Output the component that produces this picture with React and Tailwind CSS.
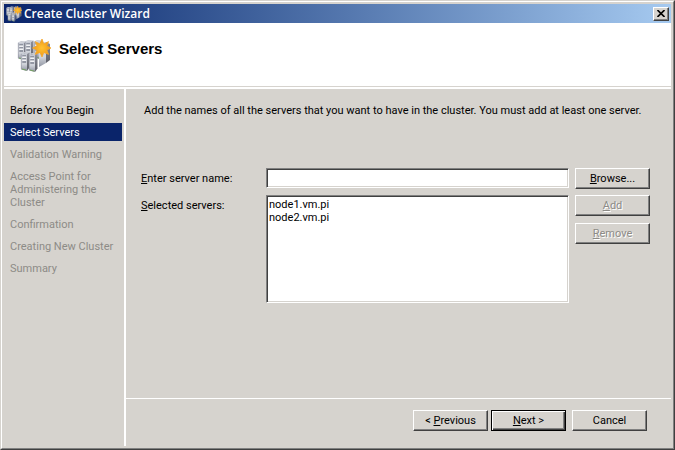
import React, { useState } from "react";

const steps = [
  { label: "Before You Begin", state: "done" },
  { label: "Select Servers", state: "current" },
  { label: "Validation Warning", state: "pending" },
  { label: "Access Point for Administering the Cluster", state: "pending" },
  { label: "Confirmation", state: "pending" },
  { label: "Creating New Cluster", state: "pending" },
  { label: "Summary", state: "pending" },
];

const stepStyles = {
  done: "text-black",
  current: "bg-[#0a246a] text-white",
  pending: "text-[#8d8b87]",
};

const raised =
  "border border-t-white border-l-white border-r-[#404040] border-b-[#404040] shadow-[inset_-1px_-1px_0_#808080]";
const sunken =
  "border border-t-[#808080] border-l-[#808080] border-r-white border-b-white bg-white shadow-[inset_1px_1px_0_#404040,inset_-1px_-1px_0_#d6d3ce]";

const Tower = ({ x, y }) => (
  <g transform={`translate(${x} ${y})`}>
    <path d="M0 1.5 L3 0 L8.5 0.5 L6 2z" fill="#c9ccd4" />
    <path d="M6 2 L8.5 0.5 L8.5 15.5 L6 19z" fill="url(#towerSide)" />
    <path d="M0 1.5 L6 2 V19 L0 17.5z" fill="url(#towerFront)" />
    <path d="M0.3 1.8 V17.2" stroke="#8e929d" strokeWidth="0.6" />
    <path d="M1.3 4h3.8M1.3 7h3.8M1.3 10h3.8" stroke="#565d6c" strokeWidth="1" />
    <path d="M1.3 5.2h3.8M1.3 8.2h3.8" stroke="#ffffff" strokeWidth="1.2" />
    <path d="M1 17 L5.4 18.2" stroke="#74a05e" strokeWidth="1" />
  </g>
);

const ClusterIcon = ({ className }) => (
  <svg viewBox="0 0 34 34" className={className} aria-hidden="true">
    <defs>
      <linearGradient id="towerFront" x1="0" y1="0" x2="0" y2="1">
        <stop offset="0" stopColor="#c4c8d2" />
        <stop offset="0.6" stopColor="#d2d5dc" />
        <stop offset="1" stopColor="#8f94a1" />
      </linearGradient>
      <linearGradient id="towerSide" x1="0" y1="0" x2="0" y2="1">
        <stop offset="0" stopColor="#8f929c" />
        <stop offset="1" stopColor="#5c5e67" />
      </linearGradient>
      <radialGradient id="starFill">
        <stop offset="0" stopColor="#ffc234" />
        <stop offset="1" stopColor="#f09a14" />
      </radialGradient>
    </defs>
    <Tower x={1} y={2} />
    <Tower x={8} y={1} />
    <Tower x={17} y={1} />
    <path d="M22 4 L29 3 V24 L22 28z" fill="url(#towerFront)" />
    <path d="M29 3 L33 5 V21 L29 24z" fill="url(#towerSide)" />
    <Tower x={4} y={13} />
    <Tower x={12} y={14} />
    <path
      d="M25 0 L26.8 5 L31.6 2.6 L29.8 7 L34 9 L29.8 11 L31.6 15.4 L26.8 13.4 L25 18 L23 13.4 L18.2 15.4 L20 11 L15.5 9 L20 7 L18.2 2.6 L23 5z"
      fill="url(#starFill)"
      stroke="#f5a62a"
      strokeWidth="0.8"
    />
  </svg>
);

const WizardButton = ({ children, isDefault, ...props }) => (
  <button
    type="button"
    className={`h-[21px] w-[75px] shrink-0 bg-[#d6d3ce] leading-4 disabled:text-[#8d8b87] disabled:[text-shadow:1px_1px_0_white] ${
      isDefault
        ? "border border-black shadow-[inset_1px_1px_0_white,inset_-1px_-1px_0_#404040,inset_-2px_-2px_0_#808080]"
        : raised
    }`}
    {...props}
  >
    {children}
  </button>
);

const TitleBar = () => (
  <div className="flex h-[19px] items-center bg-linear-to-r from-[#0a246a] to-[#a6caf0] pr-[2px] pl-[2px]">
    <ClusterIcon className="size-4" />
    <span className="ml-[2px] flex-1 font-['Open_Sans',sans-serif] text-[12px] leading-4 font-semibold text-white">
      Create Cluster Wizard
    </span>
    <button
      type="button"
      aria-label="Close"
      className={`flex h-[14px] w-4 items-center justify-center bg-[#d6d3ce] ${raised}`}
    >
      <svg viewBox="0 0 8 7" className="h-[7px] w-2" aria-hidden="true">
        <path
          d="M0.5 0 L7.5 7 M7.5 0 L0.5 7"
          stroke="#000"
          strokeWidth="1.6"
        />
      </svg>
    </button>
  </div>
);

const Sidebar = () => (
  <nav className="w-[122px] shrink-0 border-r-2 border-white pt-3 pr-[2px]">
    <ol className="flex flex-col gap-1">
      {steps.map((step) => (
        <li
          key={step.label}
          aria-current={step.state === "current" ? "step" : undefined}
          className={`pt-[3px] pr-1 pb-[2px] pl-[6px] leading-[13px] ${
            stepStyles[step.state]
          }`}
        >
          {step.label}
        </li>
      ))}
    </ol>
  </nav>
);

const App = () => {
  const [serverName, setServerName] = useState("");
  const servers = ["node1.vm.pi", "node2.vm.pi"];

  return (
    <div className="flex min-h-screen flex-col border border-t-[#d6d3ce] border-l-[#d6d3ce] border-r-[#404040] border-b-[#404040] bg-[#d6d3ce] font-[Roboto,sans-serif] text-[11px] text-black">
      <div className="flex flex-1 flex-col border border-t-white border-l-white border-r-[#808080] border-b-[#808080] p-[2px]">
        <TitleBar />

        <header className="flex h-[63px] items-start bg-white pt-4 pl-[13px]">
          <ClusterIcon className="size-[34px]" />
          <h1 className="ml-2 font-['Liberation_Sans',Arial,sans-serif] text-[15px] leading-5 font-bold">
            Select Servers
          </h1>
        </header>
        <div className="h-[3px] border-t border-[#d6d3ce] bg-white" />

        <div className="flex flex-1">
          <Sidebar />

          <div className="flex flex-1 flex-col">
            <main className="flex-1 pt-[14px] pr-[21px] pl-[15px]">
              <p className="pl-[3px] leading-4">
                Add the names of all the servers that you want to have in the
                cluster. You must add at least one server.
              </p>

              <div className="mt-[49px] grid grid-cols-[119px_1fr_75px] gap-x-[6px] gap-y-[6px]">
                <label htmlFor="server-name" className="pt-[3px] leading-4">
                  <u>E</u>nter server name:
                </label>
                <input
                  id="server-name"
                  type="text"
                  value={serverName}
                  onChange={(e) => setServerName(e.target.value)}
                  className={`h-5 min-w-0 px-1 outline-none ${sunken}`}
                />
                <WizardButton>
                  <u>B</u>rowse...
                </WizardButton>

                <label htmlFor="servers" className="pt-[3px] leading-4">
                  <u>S</u>elected servers:
                </label>
                <select
                  id="servers"
                  multiple
                  size={8}
                  className={`h-[108px] min-w-0 overflow-hidden px-[2px] py-[2px] leading-[13px] outline-none ${sunken}`}
                >
                  {servers.map((server) => (
                    <option
                      key={server}
                      value={server}
                      className="h-[13px] min-h-0 p-0 leading-[13px]"
                    >
                      {server}
                    </option>
                  ))}
                </select>
                <div className="flex flex-col gap-[7px]">
                  <WizardButton disabled>
                    <u>A</u>dd
                  </WizardButton>
                  <WizardButton disabled>
                    <u>R</u>emove
                  </WizardButton>
                </div>
              </div>
            </main>

            <footer className="flex h-12 justify-end border-t border-white pt-[11px] pr-6">
              <WizardButton>
                &lt; <u>P</u>revious
              </WizardButton>
              <div className="mr-[6px] ml-[3px] flex">
                <WizardButton isDefault>
                  <u>N</u>ext &gt;
                </WizardButton>
              </div>
              <WizardButton>Cancel</WizardButton>
            </footer>
          </div>
        </div>
      </div>
    </div>
  );
};

export default App;
